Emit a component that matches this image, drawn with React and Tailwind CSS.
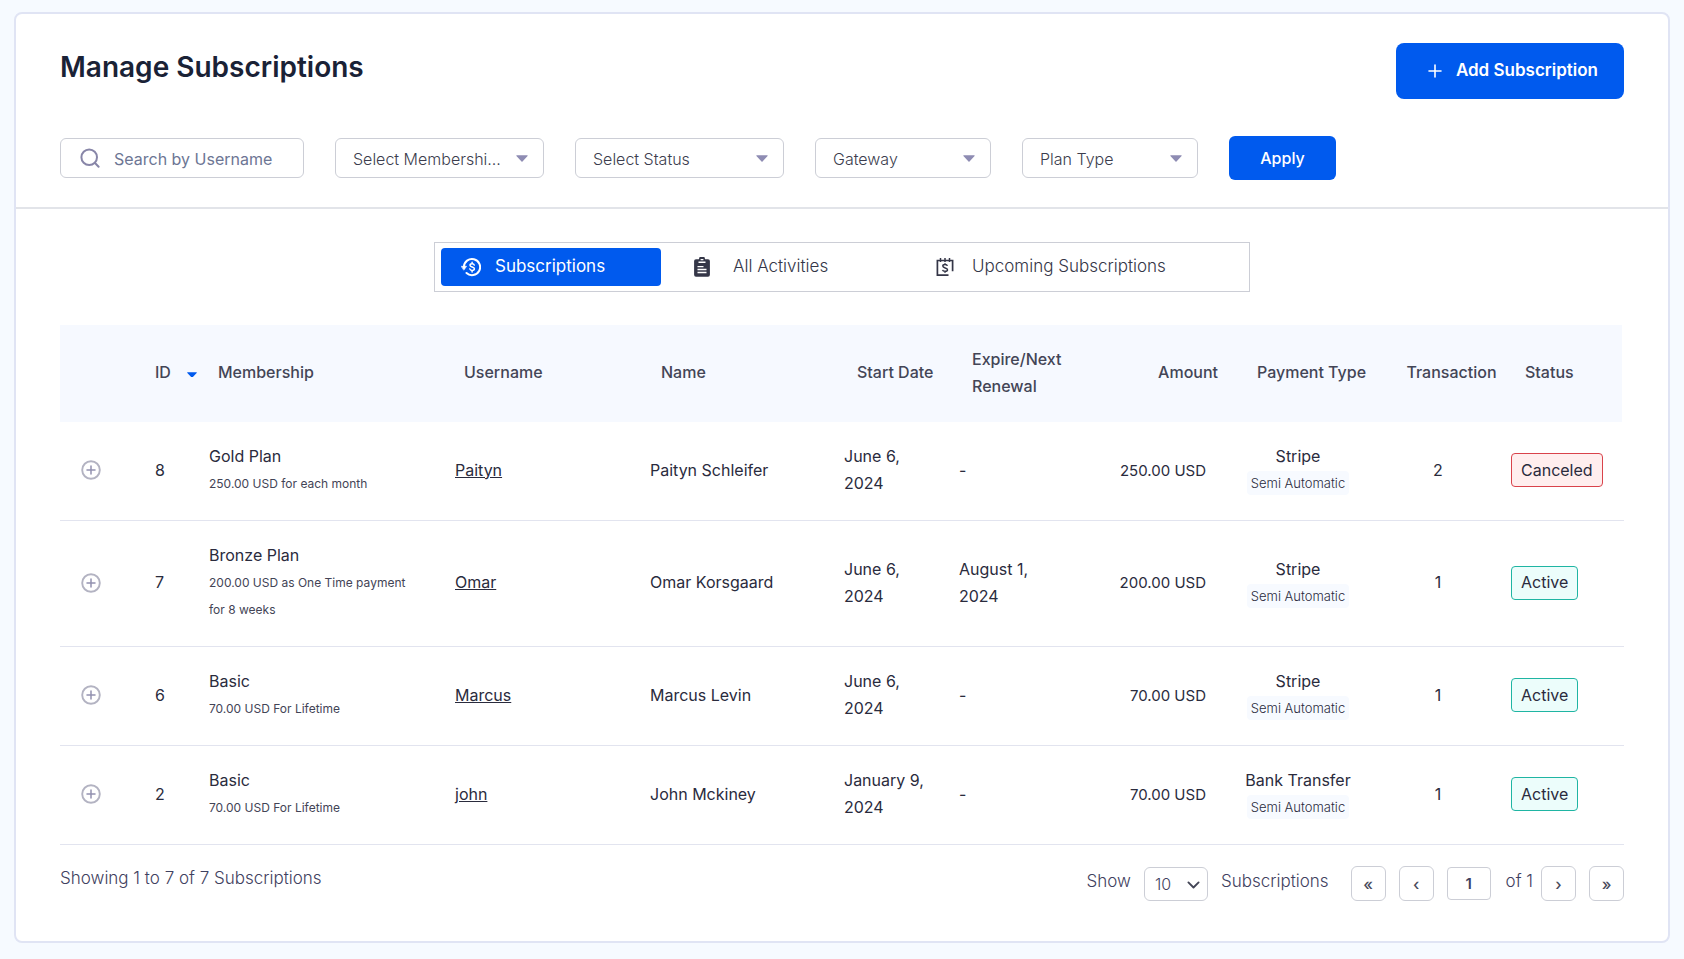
import React, { useState } from 'react';

// --- ICONS ---
const SearchIcon = (props) => (
  <svg {...props} viewBox="0 0 20 20" fill="none" stroke="currentColor" strokeWidth="2" strokeLinecap="round">
    <circle cx="9.2" cy="9.2" r="7.8" />
    <path d="M15 15l3.6 3.8" />
  </svg>
);

const PlusIcon = (props) => (
  <svg {...props} viewBox="0 0 14 14" fill="none" stroke="currentColor" strokeWidth="1.6" strokeLinecap="round">
    <path d="M7 1v12M1 7h12" />
  </svg>
);

const CirclePlusIcon = (props) => (
  <svg {...props} viewBox="0 0 20 20" fill="none">
    <circle cx="10" cy="10" r="8.8" stroke="#b3b3c2" strokeWidth="1.9" />
    <path d="M10 6v8M6 10h8" stroke="#9291b0" strokeWidth="1.5" strokeLinecap="round" />
  </svg>
);

const CaretIcon = (props) => (
  <svg {...props} viewBox="0 0 12 7" fill="currentColor">
    <path d="M.8.3h10.4c.5 0 .7.5.4.8L6.5 6.6a.7.7 0 0 1-1 0L.4 1.1C.1.8.3.3.8.3z" />
  </svg>
);

const ChevronIcon = (props) => (
  <svg {...props} viewBox="0 0 14 9" fill="none" stroke="currentColor" strokeWidth="2" strokeLinecap="round" strokeLinejoin="round">
    <path d="M1.5 1.5L7 7l5.5-5.5" />
  </svg>
);

const DollarHistoryIcon = (props) => (
  <svg {...props} viewBox="0 0 20 20" fill="none" stroke="currentColor" strokeLinecap="round">
    <path d="M2.9 10a8.1 8.1 0 1 1 2.6 6" strokeWidth="2" />
    <path d="M.4 9.3h5.2L3 12.9z" fill="currentColor" strokeWidth=".6" />
    <path d="M13.3 8.1c-.3-1-1.2-1.4-2.2-1.4-1.2 0-2.1.6-2.1 1.6 0 2.3 4.4 1.1 4.4 3.5 0 1-1 1.6-2.3 1.6-1.1 0-2-.5-2.3-1.5M11.1 5.2v1.5M11.1 13.4v1.5" strokeWidth="1.5" />
  </svg>
);

const ClipboardIcon = (props) => (
  <svg {...props} viewBox="0 0 18 20">
    <path fill="currentColor" d="M3 2.2h3a3 3 0 0 1 6 0h3a1.9 1.9 0 0 1 1.9 1.9v13.7a1.9 1.9 0 0 1-1.9 1.9H3a1.9 1.9 0 0 1-1.9-1.9V4.1A1.9 1.9 0 0 1 3 2.2z" />
    <path d="M7.6 2.6h2.8M5.5 5.2h7" stroke="#fff" strokeWidth="1.4" />
    <path d="M4.5 9.7h6M4.5 12.5h9M4.5 15.5h9" stroke="#fff" strokeWidth="1.3" />
  </svg>
);

const DollarCalendarIcon = (props) => (
  <svg {...props} viewBox="0 0 18 20" fill="none" stroke="currentColor">
    <path d="M12.5 18.2H1.4V3.5h15.2v10.7" strokeWidth="1.7" />
    <path d="M4.5 1v4M9 1v4M13.5 1v4" strokeWidth="1.5" />
    <path d="M11.4 8.9c-.3-1-1.3-1.4-2.4-1.4-1.3 0-2.2.6-2.2 1.6 0 2.4 4.7 1.2 4.7 3.6 0 1-1.1 1.6-2.5 1.6-1.2 0-2.2-.5-2.4-1.5M9 6.2v1.3M9 14.3v1.5" strokeWidth="1.5" />
  </svg>
);

// --- DATA ---
const FILTERS = [
  { id: 'membership', label: 'Select Membershi...', width: 'w-[209px]' },
  { id: 'status', label: 'Select Status', width: 'w-[209px]' },
  { id: 'gateway', label: 'Gateway', width: 'w-[176px]' },
  { id: 'plan-type', label: 'Plan Type', width: 'w-[176px]' },
];

const TABS = [
  { label: 'Subscriptions', Icon: DollarHistoryIcon, layout: 'w-[220px] gap-[14px] pl-5', icon: 'w-5' },
  { label: 'All Activities', Icon: ClipboardIcon, layout: 'w-[243px] gap-[22px] pl-8', icon: 'w-[18px]' },
  { label: 'Upcoming Subscriptions', Icon: DollarCalendarIcon, layout: 'flex-1 gap-[18px] pl-8', icon: 'w-[18px]' },
];

const ROWS = [
  { id: 8, plan: 'Gold Plan', detail: '250.00 USD for each month', username: 'Paityn', name: 'Paityn Schleifer', start: 'June 6, 2024', expire: '-', amount: '250.00 USD', gateway: 'Stripe', transactions: 2, status: 'Canceled' },
  { id: 7, plan: 'Bronze Plan', detail: '200.00 USD as One Time payment for 8 weeks', username: 'Omar', name: 'Omar Korsgaard', start: 'June 6, 2024', expire: 'August 1, 2024', amount: '200.00 USD', gateway: 'Stripe', transactions: 1, status: 'Active' },
  { id: 6, plan: 'Basic', detail: '70.00 USD For Lifetime', username: 'Marcus', name: 'Marcus Levin', start: 'June 6, 2024', expire: '-', amount: '70.00 USD', gateway: 'Stripe', transactions: 1, status: 'Active' },
  { id: 2, plan: 'Basic', detail: '70.00 USD For Lifetime', username: 'john', name: 'John Mckiney', start: 'January 9, 2024', expire: '-', amount: '70.00 USD', gateway: 'Bank Transfer', transactions: 1, status: 'Active' },
];

const STATUS_STYLES = {
  Canceled: 'border-[#d9434b] bg-[#ffeeee]',
  Active: 'border-[#1fb5a3] bg-[#ecfdfb]',
};

function FilterSelect({ id, label, width }) {
  return (
    <div className={`relative ${width}`}>
      <select
        id={id}
        aria-label={label}
        className="block h-10 w-full appearance-none rounded-md border border-[#ccced6] bg-white pl-[17px] pr-10 pt-0.5 text-base font-light text-[#3c3d4e]"
      >
        <option>{label}</option>
      </select>
      <CaretIcon className="pointer-events-none absolute right-4 top-[17px] w-3 text-[#8e8cb3]" />
    </div>
  );
}

function PageButton({ label, children }) {
  return (
    <button
      type="button"
      aria-label={label}
      className="h-[35px] w-[35px] rounded-md border border-[#ccced6] bg-white text-base font-medium leading-none text-[#4a4b5c]"
    >
      {children}
    </button>
  );
}

function SubscriptionTable() {
  return (
    <table className="w-full table-fixed border-collapse text-left text-base leading-[27px] text-[#2a2b3d]">
      <colgroup>
        <col className="w-[83px]" />
        <col className="w-[54px]" />
        <col className="w-[246px]" />
        <col className="w-[195px]" />
        <col className="w-[194px]" />
        <col className="w-[115px]" />
        <col className="w-[115px]" />
        <col className="w-[156px]" />
        <col className="w-[160px]" />
        <col className="w-[120px]" />
        <col className="w-[126px]" />
      </colgroup>
      <thead>
        <tr className="h-[97px] text-[#434556] *:bg-[#f6f9ff] *:bg-clip-padding *:pb-0.5 *:font-medium">
          <th aria-label="Expand" />
          <th className="pl-3">
            <span className="flex items-center justify-between">
              ID
              <CaretIcon className="mt-1 w-[10px] text-[#005aee]" />
            </span>
          </th>
          <th className="pl-[21px]">Membership</th>
          <th className="pl-[21px]">Username</th>
          <th className="pl-[23px]">Name</th>
          <th className="whitespace-nowrap pl-[25px]">Start Date</th>
          <th className="pl-[25px]">Expire/Next Renewal</th>
          <th className="text-right">Amount</th>
          <th className="whitespace-nowrap pl-[27px] text-center">Payment Type</th>
          <th className="whitespace-nowrap pl-[27px] text-center">Transaction</th>
          <th className="border-r-4 border-white pl-[27px]">Status</th>
        </tr>
      </thead>
      <tbody>
        {ROWS.map((row) => (
          <tr key={row.id} className="border-b border-[#e2e4ef] *:pb-[23px] *:pt-[21px]">
            <td className="pl-[21px]">
              <button type="button" aria-label={`Show details of ${row.id}`} className="block">
                <CirclePlusIcon className="w-5" />
              </button>
            </td>
            <td className="pl-3">{row.id}</td>
            <td className="pl-3 pr-5">
              <div>{row.plan}</div>
              <div className="text-xs leading-[27px] text-[#434456]">{row.detail}</div>
            </td>
            <td className="pl-3">
              <a href="#" className="underline">{row.username}</a>
            </td>
            <td className="pl-3">{row.name}</td>
            <td className="pl-3 pr-4">{row.start}</td>
            <td className="pl-3 pr-4">{row.expire}</td>
            <td className="pr-3 text-right text-[15px]">{row.amount}</td>
            <td className="text-center">
              <div>{row.gateway}</div>
              <div className="text-[13px] font-light leading-[27px] text-[#2a2b3d]">
                <span className="rounded bg-[#f7faff] px-1 py-1">Semi Automatic</span>
              </div>
            </td>
            <td className="text-center">{row.transactions}</td>
            <td className="pl-[13px]">
              <span className={`inline-flex h-[34px] items-center rounded border px-[9px] align-middle ${STATUS_STYLES[row.status]}`}>
                {row.status}
              </span>
            </td>
          </tr>
        ))}
      </tbody>
    </table>
  );
}

/**
 * Subscription management page: filters, tabs, table and pagination.
 */
function App() {
  const [search, setSearch] = useState('');
  const [activeTab, setActiveTab] = useState('Subscriptions');
  const [page, setPage] = useState('1');

  return (
    <div className="min-h-screen bg-[#f6faff] px-[14px] pb-[14px] pt-3 font-['Inter',sans-serif]">
      <div className="rounded-lg border-2 border-[#e0e4f4] bg-white">

        {/* Header */}
        <div className="border-b-2 border-[#e2e4e9] px-11 pb-[27px] pt-[29px]">
          <div className="flex items-start justify-between">
            <h1 className="pt-1 text-[28px] font-semibold leading-10 text-[#1a2236]">Manage Subscriptions</h1>
            <button type="button" className="flex h-14 items-center gap-[14px] rounded-lg bg-[#005aee] pl-8 pr-[26px] text-[17px] font-semibold text-white">
              <PlusIcon className="w-[14px]" />
              Add Subscription
            </button>
          </div>

          {/* Filters */}
          <div className="mt-[37px] flex items-center gap-[31px]">
            <label className="flex h-10 w-[244px] items-center gap-[14px] rounded-md border border-[#ccced6] pl-[19px] text-[#8886a8]">
              <SearchIcon className="w-5 shrink-0" />
              <input
                type="text"
                aria-label="Search by Username"
                placeholder="Search by Username"
                value={search}
                onChange={(e) => setSearch(e.target.value)}
                className="w-full min-w-0 bg-transparent pt-0.5 text-base text-[#4a4b5c] outline-none placeholder:text-[#6d7694]"
              />
            </label>
            {FILTERS.map((filter) => (
              <FilterSelect key={filter.id} {...filter} />
            ))}
            <button type="button" className="h-11 w-[107px] rounded-md bg-[#005aee] text-base font-medium text-white">
              Apply
            </button>
          </div>
        </div>

        <div className="px-11 pb-10 pt-[33px]">
          {/* Tabs */}
          <div className="mx-auto flex w-[816px] max-w-full border border-[#ccced6] px-1.5 py-[5px]">
            {TABS.map(({ label, Icon, layout, icon }) => (
              <button
                key={label}
                type="button"
                onClick={() => setActiveTab(label)}
                className={`flex h-[38px] items-center rounded text-[17px] ${layout} ${
                  activeTab === label ? 'bg-[#005aee] text-white' : 'font-light text-[#343647]'
                }`}
              >
                <Icon className={icon} />
                {label}
              </button>
            ))}
          </div>

          <div className="mt-[33px]">
            <SubscriptionTable />
          </div>

          {/* Pagination */}
          <div className="mt-[21px] flex items-start justify-between text-[17px] font-light text-[#3f4160]">
            <p className="leading-6">Showing 1 to 7 of 7 Subscriptions</p>
            <div className="flex items-center">
              <label htmlFor="page-size" className="pb-1">Show</label>
              <div className="relative mx-[13px]">
                <select id="page-size" className="block h-[34px] w-16 appearance-none rounded-md border border-[#ccced6] bg-white pl-[10px] text-base">
                  <option>10</option>
                </select>
                <ChevronIcon className="pointer-events-none absolute right-2 top-[14px] w-[13px] text-[#434556]" />
              </div>
              <span className="pb-1">Subscriptions</span>
              <div className="ml-[22px] flex items-center gap-[13px]">
                <PageButton label="First page">«</PageButton>
                <PageButton label="Previous page">‹</PageButton>
                <input
                  type="text"
                  aria-label="Page"
                  value={page}
                  onChange={(e) => setPage(e.target.value)}
                  className="h-[33px] w-11 rounded border border-[#ccced6] text-center text-[15px] font-semibold"
                />
                <div className="flex items-center gap-2">
                  <span className="pb-1 pl-0.5">of 1</span>
                  <PageButton label="Next page">›</PageButton>
                </div>
                <PageButton label="Last page">»</PageButton>
              </div>
            </div>
          </div>
        </div>
      </div>
    </div>
  );
}

export default App;
